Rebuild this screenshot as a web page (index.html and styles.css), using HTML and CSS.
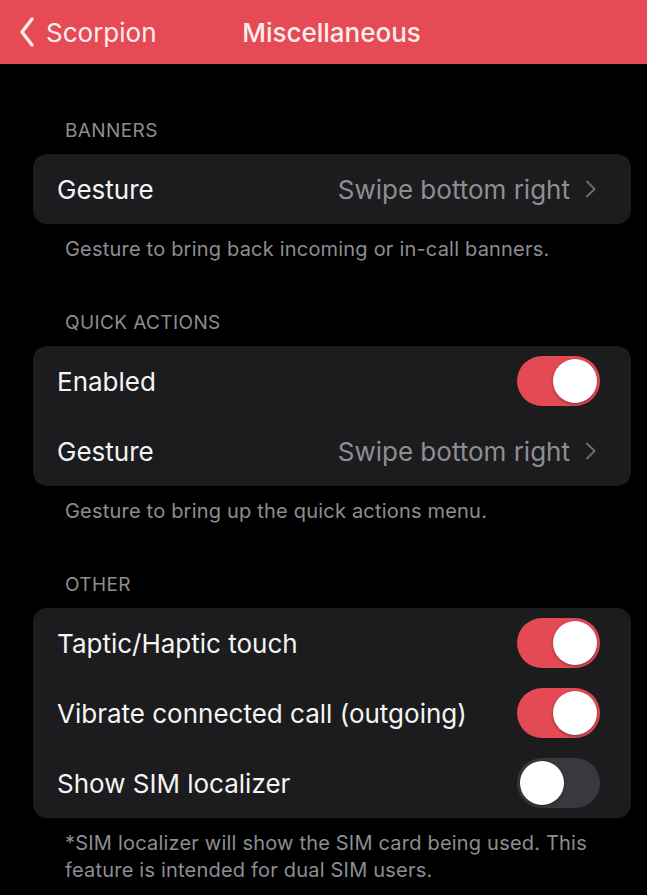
FILE: index.html
```html
<!DOCTYPE html>
<html lang="en">
<head>
    <meta charset="UTF-8">
    <title>Miscellaneous</title>
    <link rel="stylesheet" href="styles.css">
</head>
<body>

<!-- nav bar -->
<div class="navbar">
    <div class="back">
        <svg class="back-icon" width="16" height="32" viewBox="0 0 16 32">
            <path d="M14 3 L4 16 L14 29" fill="none" stroke="#fdeeee" stroke-width="3.4" stroke-linecap="round" stroke-linejoin="round"/>
        </svg>
        <span>Scorpion</span>
    </div>
    <div class="title">Miscellaneous</div>
</div>

<div class="content">
    <div class="section-header">BANNERS</div>
    <div class="group">
        <div class="row">
            <span class="label">Gesture</span>
            <span class="value">Swipe bottom right
                <svg class="chev" width="12" height="18" viewBox="0 0 12 18"><path d="M2 1.5 L9.5 9 L2 16.5" fill="none" stroke="#6a6a6f" stroke-width="2" stroke-linecap="round" stroke-linejoin="round"/></svg>
            </span>
        </div>
    </div>
    <div class="section-footer">Gesture to bring back incoming or in-call banners.</div>

    <div class="section-header">QUICK ACTIONS</div>
    <div class="group">
        <div class="row">
            <span class="label">Enabled</span>
            <span class="switch on"><span class="knob"></span></span>
        </div>
        <div class="row">
            <span class="label">Gesture</span>
            <span class="value">Swipe bottom right
                <svg class="chev" width="12" height="18" viewBox="0 0 12 18"><path d="M2 1.5 L9.5 9 L2 16.5" fill="none" stroke="#6a6a6f" stroke-width="2" stroke-linecap="round" stroke-linejoin="round"/></svg>
            </span>
        </div>
    </div>
    <div class="section-footer">Gesture to bring up the quick actions menu.</div>

    <div class="section-header">OTHER</div>
    <div class="group">
        <div class="row">
            <span class="label">Taptic/Haptic touch</span>
            <span class="switch on"><span class="knob"></span></span>
        </div>
        <div class="row">
            <span class="label">Vibrate connected call (outgoing)</span>
            <span class="switch on"><span class="knob"></span></span>
        </div>
        <div class="row">
            <span class="label">Show SIM localizer</span>
            <span class="switch"><span class="knob"></span></span>
        </div>
    </div>
    <div class="section-footer">*SIM localizer will show the SIM card being used. This feature is intended for dual SIM users.</div>
</div>

</body>
</html>
```

FILE: styles.css
```css
body {
    margin: 0;
    padding: 0;
    background-color: #000;
    font-family: Inter, "Noto Sans", Arial, sans-serif;
    color: #fff;
    width: 647px;
    height: 895px;
    overflow: hidden;
}

.navbar {
    height: 64px;
    background-color: #e64a55;
    display: flex;
    align-items: center;
    position: relative;
}

.back {
    display: flex;
    align-items: center;
    padding-left: 18px;
    font-size: 26px;
    color: #fdeeee;
}

.back-icon {
    margin-right: 12px;
}

.title {
    position: absolute;
    left: 0;
    right: 0;
    text-align: center;
    padding-left: 16px;
    font-size: 26px;
    font-weight: 500;
    color: #fdeeee;
    pointer-events: none;
}

.content {
    padding: 0 16px 0 33px;
}

.section-header {
    padding: 55px 0 0 32px;
    height: 35px;
    font-size: 19px;
    color: #8d8d92;
    letter-spacing: 0.4px;
}

.group {
    background-color: #1c1c1e;
    border-radius: 14px;
}

.row {
    height: 70px;
    display: flex;
    align-items: center;
    justify-content: space-between;
    padding: 0 31px 0 24px;
    font-size: 26px;
}

.label {
    color: #f4f4f4;
}

.value {
    color: #8e8e93;
    display: flex;
    align-items: center;
    padding-right: 3px;
}

.chev {
    margin-left: 15px;
}

.switch {
    width: 83px;
    height: 50px;
    border-radius: 25px;
    background-color: #39393d;
    position: relative;
    flex-shrink: 0;
}

.switch.on {
    background-color: #e44a53;
}

.knob {
    position: absolute;
    top: 3px;
    left: 3px;
    width: 44px;
    height: 44px;
    border-radius: 50%;
    background-color: #fff;
    box-shadow: 0 1px 3px rgba(0, 0, 0, 0.4);
}

.switch.on .knob {
    left: 36px;
}

.section-footer {
    padding: 12px 40px 0 32px;
    font-size: 20px;
    line-height: 27px;
    color: #8d8d92;
    letter-spacing: 0.2px;
}

.group:last-of-type {
    margin-bottom: 0;
}

.section-footer + .section-header {
    padding-top: 48px;
}
```
